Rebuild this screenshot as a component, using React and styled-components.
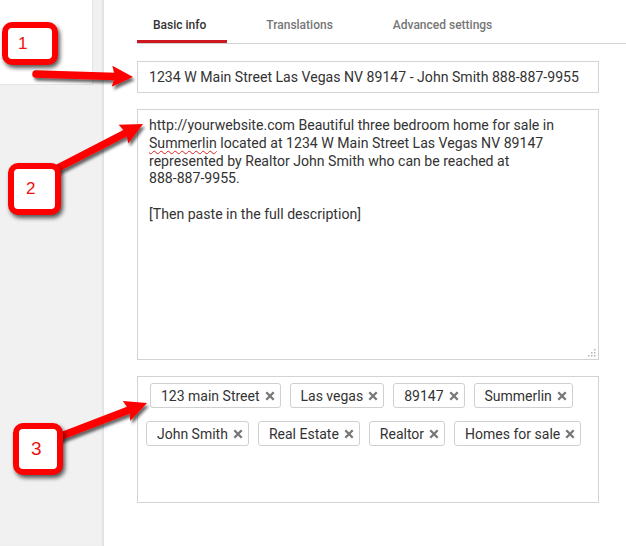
import React from 'react';
import styled, { createGlobalStyle } from 'styled-components';

const Global = createGlobalStyle`
  html, body { margin: 0; padding: 0; background: #fff; }
  body { font-family: Roboto, "Liberation Sans", Arial, sans-serif; }
`;

const Page = styled.div`
  position: relative;
  display: flex;
  width: 626px;
  height: 546px;
  overflow: hidden;
  background: #fff;
`;

const Sidebar = styled.aside`
  flex: none;
  width: 104px;
  background: #f1f1f1;
  box-shadow: inset -3px 0 3px -2px rgba(0, 0, 0, 0.1);
  display: flex;
  flex-direction: column;
`;

const SideCard = styled.div`
  box-sizing: border-box;
  width: 93px;
  height: 85px;
  background: #fff;
  border-right: 1px solid #e4e4e4;
  border-bottom: 1px solid #e4e4e4;
`;

const Main = styled.main`
  flex: 1;
  padding-left: 33px;
  display: flex;
  flex-direction: column;
`;

const Tabs = styled.nav`
  box-sizing: border-box;
  display: flex;
  height: 44px;
  border-bottom: 1px solid #d2d2d2;
`;

const Tab = styled.div`
  box-sizing: border-box;
  height: 43px;
  padding: 18px 21px 0 16px;
  margin-right: 23px;
  font-size: 12px;
  line-height: 14px;
  font-weight: 500;
  color: ${p => (p.$active ? '#333' : '#767676')};
  border-bottom: 3px solid ${p => (p.$active ? '#cc181e' : 'transparent')};
  white-space: nowrap;
`;

const Fields = styled.div`
  width: 462px;
  display: flex;
  flex-direction: column;
  gap: 16px;
  margin-top: 17px;
`;

const TitleInput = styled.div`
  box-sizing: border-box;
  height: 32px;
  border: 1px solid #d3d3d3;
  padding: 0 11px;
  font-size: 14.1px;
  line-height: 30px;
  color: #333;
  white-space: nowrap;
`;

const TextArea = styled.div`
  position: relative;
  box-sizing: border-box;
  height: 251px;
  border: 1px solid #d3d3d3;
  padding: 7px 11px;
  font-size: 14.1px;
  line-height: 17.8px;
  color: #333;
  white-space: nowrap;
`;

const Misspelled = styled.span`
  text-decoration: underline wavy #e02020;
  text-decoration-thickness: 1px;
  text-underline-offset: 2px;
`;

const Grip = styled.svg`
  position: absolute;
  right: 2px;
  bottom: 2px;
`;

const TagBox = styled.div`
  box-sizing: border-box;
  height: 127px;
  border: 1px solid #d3d3d3;
  padding-top: 6px;
  display: flex;
  flex-direction: column;
  gap: 13px;
`;

const TagRow = styled.div`
  display: flex;
  gap: 9px;
  padding-left: ${p => p.$indent}px;
`;

const Tag = styled.div`
  box-sizing: border-box;
  height: 25px;
  display: flex;
  align-items: center;
  gap: 5px;
  padding: 0 5px 0 10px;
  border: 1px solid #d0d0d0;
  border-radius: 3px;
  font-size: 14px;
  color: #333;
  white-space: nowrap;
`;

const Overlay = styled.svg`
  position: absolute;
  left: 0;
  top: 0;
  pointer-events: none;
`;

const Callout = styled.div`
  position: absolute;
  box-sizing: border-box;
  left: ${p => p.$x}px;
  top: ${p => p.$y}px;
  width: ${p => p.$w}px;
  height: ${p => p.$h}px;
  border: 6px solid #ff0000;
  border-radius: 10px;
  background: #fff;
  box-shadow: 2px 3px 4px rgba(0, 0, 0, 0.65);
  display: flex;
  align-items: center;
  padding-left: ${p => p.$pad}px;
  font-family: "Liberation Sans", Arial, sans-serif;
  font-size: ${p => p.$size}px;
  color: #ee1111;
`;

function CloseIcon() {
  return (
    <svg width="10" height="10" viewBox="0 0 10 10">
      <path d="M1.3 1.3 L8.7 8.7 M8.7 1.3 L1.3 8.7" stroke="#777" strokeWidth="2.3" strokeLinecap="butt" />
    </svg>
  );
}

function arrow(x1, y1, x2, y2, hl, hw) {
  const dx = x2 - x1;
  const dy = y2 - y1;
  const len = Math.hypot(dx, dy);
  const ux = dx / len;
  const uy = dy / len;
  const nx = -uy;
  const ny = ux;
  const bx = x2 - ux * hl;
  const by = y2 - uy * hl;
  const head = [
    [x2, y2],
    [bx + (nx * hw) / 2, by + (ny * hw) / 2],
    [bx + ux * 3, by + uy * 3],
    [bx - (nx * hw) / 2, by - (ny * hw) / 2],
  ]
    .map(p => p.join(','))
    .join(' ');
  return { bx: bx + ux * 4, by: by + uy * 4, head };
}

const arrows = [
  [36, 74, 133, 77, 21, 21],
  [50, 172, 143, 124, 22, 21],
  [56, 438, 147, 403, 22, 21],
];

const tagsRow1 = ['123 main Street', 'Las vegas', '89147', 'Summerlin'];
const tagsRow2 = ['John Smith', 'Real Estate', 'Realtor', 'Homes for sale'];

export default function App() {
  return (
    <>
      <Global />
      <Page>
        <Sidebar>
          <SideCard />
        </Sidebar>
        <Main>
          <Tabs>
            <Tab $active>Basic info</Tab>
            <Tab>Translations</Tab>
            <Tab>Advanced settings</Tab>
          </Tabs>
          <Fields>
            <TitleInput>1234 W Main Street Las Vegas NV 89147 - John Smith 888-887-9955</TitleInput>
            <TextArea>
              http://yourwebsite.com Beautiful three bedroom home for sale in
              <br />
              <Misspelled>Summerlin</Misspelled> located at 1234 W Main Street Las Vegas NV 89147
              <br />
              represented by Realtor John Smith who can be reached at
              <br />
              888-887-9955.
              <br />
              <br />
              [Then paste in the full description]
              <Grip width="9" height="9" viewBox="0 0 9 9">
                <g fill="#b5b5b5">
                  <rect x="7" y="1" width="1.5" height="1.5" />
                  <rect x="4" y="4" width="1.5" height="1.5" />
                  <rect x="7" y="4" width="1.5" height="1.5" />
                  <rect x="1" y="7" width="1.5" height="1.5" />
                  <rect x="4" y="7" width="1.5" height="1.5" />
                  <rect x="7" y="7" width="1.5" height="1.5" />
                </g>
              </Grip>
            </TextArea>
            <TagBox>
              <TagRow $indent={12}>
                {tagsRow1.map(t => (
                  <Tag key={t}>
                    {t}
                    <CloseIcon />
                  </Tag>
                ))}
              </TagRow>
              <TagRow $indent={8}>
                {tagsRow2.map(t => (
                  <Tag key={t}>
                    {t}
                    <CloseIcon />
                  </Tag>
                ))}
              </TagRow>
            </TagBox>
          </Fields>
        </Main>

        <Overlay width="626" height="546" viewBox="0 0 626 546">
          <defs>
            <filter id="sh" x="-20%" y="-50%" width="140%" height="200%">
              <feDropShadow dx="2" dy="3" stdDeviation="1.8" floodColor="#000" floodOpacity="0.6" />
            </filter>
          </defs>
          {arrows.map(([x1, y1, x2, y2, hl, hw], i) => {
            const a = arrow(x1, y1, x2, y2, hl, hw);
            return (
              <g key={i} filter="url(#sh)">
                <line x1={x1} y1={y1} x2={a.bx} y2={a.by} stroke="#ff0000" strokeWidth="7.5" strokeLinecap="round" />
                <polygon points={a.head} fill="#ff0000" strokeLinejoin="round" />
              </g>
            );
          })}
        </Overlay>

        <Callout $x={2} $y={22} $w={56} $h={43} $pad={10} $size={17}>1</Callout>
        <Callout $x={8} $y={163} $w={53} $h={52} $pad={12} $size={17}>2</Callout>
        <Callout $x={13} $y={423} $w={50} $h={52} $pad={12} $size={19}>3</Callout>
      </Page>
    </>
  );
}
